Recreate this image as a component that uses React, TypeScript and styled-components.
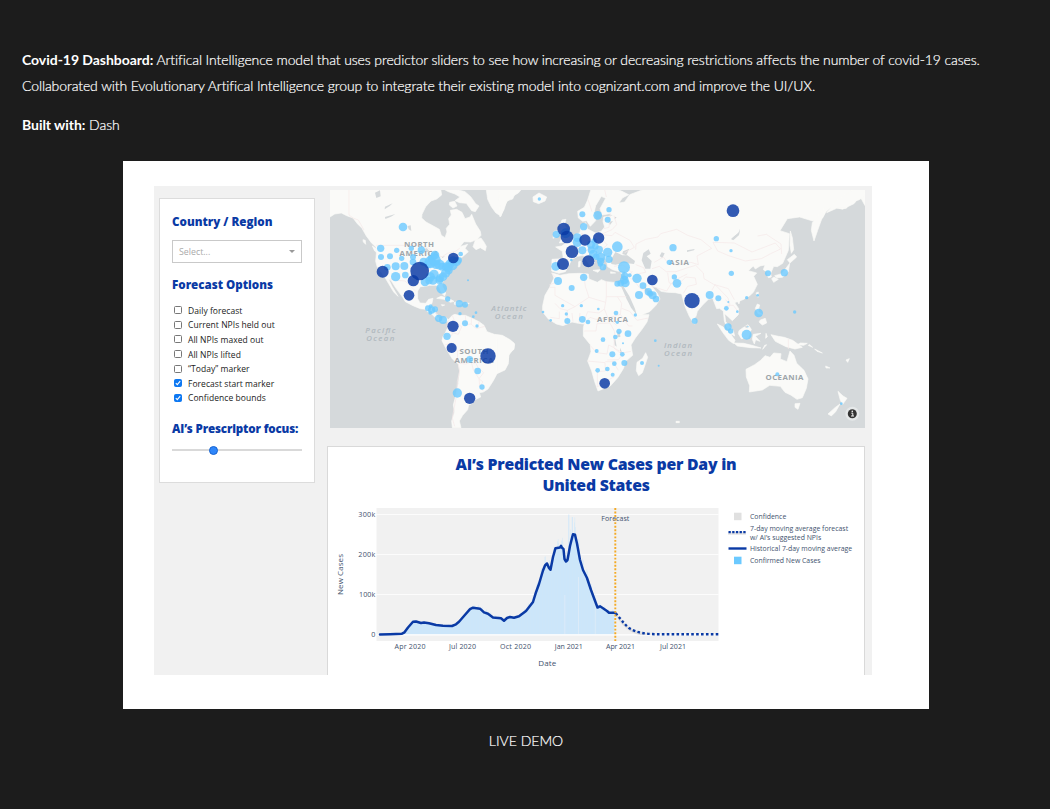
import React from "react";
import styled, { createGlobalStyle } from "styled-components";

const GlobalStyle = createGlobalStyle`
  * { box-sizing: border-box; }
  body {
    margin: 0;
    background: #1c1c1c;
    color: #fff;
    font-family: Lato, sans-serif;
  }
`;

const Page = styled.main`
  height: 809px;
  padding: 47px 22px 0;
  overflow: hidden;
  display: flex;
  flex-direction: column;
  align-items: center;
`;

const Intro = styled.section`
  width: 100%;
  font-size: 14px;
  font-weight: 300;
  line-height: 26px;
  letter-spacing: -0.1px;
  -webkit-text-stroke: 0.2px #fff;
`;

const Paragraph = styled.p`
  margin: 0 0 13px;
  white-space: nowrap;
`;

const Strong = styled.strong`
  font-weight: 700;
  letter-spacing: -0.04px;
  -webkit-text-stroke: 0;
`;

const Showcase = styled.figure`
  width: 806px;
  height: 548px;
  margin: 10px 0 0 2px;
  padding: 25px 57px 34px 31px;
  background: #fff;
`;

const Dashboard = styled.div`
  height: 489px;
  display: flex;
  align-items: flex-start;
  padding-left: 5px;
  background: #f1f1f1;
  color: #222;
  font-family: "Open Sans", sans-serif;
`;

const Sidebar = styled.aside`
  width: 156px;
  height: 285px;
  margin-top: 12px;
  padding: 15px 12px 0;
  background: #fff;
  border: 1px solid #dcdcdc;
`;

const SideHeading = styled.h3<{ $gap: number; $track?: number }>`
  margin: 0 0 ${(p) => p.$gap}px;
  color: #0a3aa5;
  font-size: 11.6px;
  font-weight: 800;
  line-height: 16px;
  letter-spacing: ${(p) => p.$track ?? 0}px;
  white-space: nowrap;
`;

const Select = styled.div`
  width: 130px;
  height: 23px;
  margin-bottom: 14px;
  padding: 0 6px;
  display: flex;
  align-items: center;
  justify-content: space-between;
  border: 1px solid #c9c9c9;
  color: #aaa;
  font-size: 8.8px;
`;

const Caret = styled.span`
  border: 3px solid transparent;
  border-top-color: #999;
  border-bottom: 0;
`;

const Options = styled.ul`
  margin: 0 0 16px;
  padding: 0;
  list-style: none;
`;

const Option = styled.li`
  height: 14.6px;
  padding-left: 2px;
  display: flex;
  align-items: center;
  gap: 6px;
  font-size: 8.5px;
  letter-spacing: 0.05px;
  white-space: nowrap;
`;

const Check = styled.span<{ $on: boolean }>`
  width: 8px;
  height: 8px;
  display: flex;
  border: 1px solid ${(p) => (p.$on ? "#0d78f2" : "#777")};
  border-radius: 1.5px;
  background: ${(p) => (p.$on ? "#0d78f2" : "#fff")};
`;

const Slider = styled.div`
  width: 130px;
  height: 9px;
  display: flex;
  align-items: center;
  background: linear-gradient(#d9d9d9, #d9d9d9) center / 100% 2.4px no-repeat;
`;

const Knob = styled.span`
  width: 9px;
  height: 9px;
  margin-left: 37px;
  border: 1px solid #1763d1;
  border-radius: 50%;
  background: #2e86fa;
`;

const Main = styled.div`
  width: 538px;
  margin-left: 12px;
  padding-top: 4px;
`;

const MapFrame = styled.div`
  height: 238px;
  margin-left: 3px;
  svg { display: block; }
`;

const ChartPanel = styled.section`
  height: 229px;
  margin-top: 18px;
  padding-top: 7px;
  border: 1px solid #d9d9d9;
  border-bottom: 0;
  background: #fff;
`;

const ChartTitle = styled.h2`
  margin: 0 0 1px;
  color: #0a3aa5;
  font-size: 15.8px;
  font-weight: 800;
  line-height: 21px;
  letter-spacing: -0.25px;
  text-align: center;
`;

const ChartBody = styled.div`
  display: flex;
  align-items: flex-start;
`;

const Legend = styled.ul`
  margin: 12px 0 0 8px;
  padding: 0;
  list-style: none;
  color: #42526e;
  font-size: 6.9px;
  line-height: 9px;
`;

const LegendRow = styled.li<{ $height: number }>`
  height: ${(p) => p.$height}px;
  display: flex;
  align-items: center;
  gap: 3px;
  white-space: nowrap;
`;

const Demo = styled.a`
  margin: 19px 0 0 2px;
  font-size: 14px;
  font-weight: 300;
  line-height: 26px;
  -webkit-text-stroke: 0.2px #fff;
`;

type Bubble = [number, number, number];
type Region = {
  origin: string;
  land: string;
  water: string;
  borders: string;
  light: Bubble[];
  dark: Bubble[];
};

// Each region is drawn on its own grid, three units to a pixel.
const regions: Region[] = [
  {
    origin: "translate(325 185) scale(.33333)",
    land: `M0 0H345L350 30L335 42L318 48L302 65L291 88L290 99L303 111L325 123L343 133L349 151L360 158L366 141L364 130L374 118L371 101L379 90L376 76L395 73L411 82L420 101L435 96L440 88L452 117L466 139L468 151L457 163L437 171L417 170L405 185L428 178L420 190L430 200L412 216L401 219L400 234L382 249L370 260L366 276L352 291L352 304L362 324L359 333L350 325L343 307L333 301L314 301L300 304L286 305L278 318L278 341L285 354L302 355L311 343L324 340L321 354L315 365L328 367L336 370L331 385L343 401L363 397L370 405L365 410L346 411L330 397L321 388L306 379L302 373L286 371L264 362L241 350L233 337L211 307L198 286L191 283L201 304L219 334L206 321L191 296L181 279L169 262L157 247L152 229L154 206L153 187L139 173L124 153L111 130L97 116L84 99L65 92L49 84L29 87L12 98Z
      M369 405L382 391L390 388L401 391L421 391L439 399L462 410L477 421L486 440L508 448L532 451L555 464L568 475L565 493L551 511L550 536L540 555L516 566L505 587L489 612L475 621L463 623L467 636L449 645L440 656L431 660L428 674L413 691L403 708L408 728L382 728L380 708L389 681L385 660L394 625L400 596L404 558L400 537L382 522L370 502L359 483L351 467L354 454L361 443L369 426Z
      M353 0H375L390 12L420 20L437 35L452 56L462 63L451 80L440 77L424 55L404 53L390 47L405 36L390 27L370 20L355 12Z M374 52L389 49L396 63L384 69L373 60Z
      M482 0H600L580 24L552 40L536 67L528 94L512 83L499 65L488 43Z
      M335 340L348 334L369 339L387 349L377 352L357 343Z M388 352L401 350L414 355L402 361L388 358Z M349 359L359 360L352 363Z M423 354L433 355L424 358Z M444 185L451 166L468 159L476 170L484 184L481 197L466 188L453 194Z M142 183L154 191L162 204L149 198Z M114 164L121 166L122 178L115 171Z`,
    water: `M150 23L165 16L167 34L154 39Z M180 65L203 55L194 63L179 73Z M180 96L211 87L198 95L181 102Z M248 123L257 121L259 138L251 133Z M284 199L305 189L315 200L299 202Z M310 208L314 203L316 223L309 232Z M323 205L337 212L330 222Z M337 224L350 221L342 229Z M350 216L360 213L353 219Z M336 389L345 384L346 391L338 398Z`,
    borders: `M72 0V90L84 99L100 105L117 135M154 181H283L311 190L337 212L352 215L367 205L391 199L404 190M195 282L218 286L240 288L264 311L272 318M303 361L316 366M330 383L340 390M370 405L366 426L382 444L380 452L359 454M382 391L391 414L410 425L400 448L382 443M421 391L423 419L438 417L454 431L480 424M439 400L439 417M462 410L459 426M359 480L380 473L384 493L398 498L397 535M398 498L418 494L432 511L447 524L459 547L476 563L462 581L474 591L462 606M402 535L422 537L439 531L449 536M400 537L404 558L397 590L396 624L388 666L382 700L389 724M439 531L445 555L462 581L464 602L475 619`,
    light: [[234,126,13],[167,190,11],[168,216,9],[195,214,9],[215,196,8],[230,220,8],[259,190,8],[289,195,11],[264,216,9],[264,231,10],[212,244,12],[238,243,12],[187,247,10],[212,275,14],[241,270,10],[296,230,12],[317,221,10],[327,212,10],[310,237,13],[316,232,18],[329,225,18],[333,238,14],[344,239,15],[352,245,12],[364,245,13],[375,237,14],[382,240,16],[384,228,14],[395,230,13],[401,226,10],[371,256,12],[362,264,14],[354,275,13],[343,285,12],[327,268,14],[316,276,14],[324,286,13],[300,291,13],[312,287,11],[345,280,12],[350,310,16],[369,247,13],[330,210,13],[407,207,7],[429,286,3],[368,342,8],[403,356,11],[420,359,9],[309,370,9],[317,364,6],[320,375,11],[330,373,9],[316,383,6],[405,386,5],[453,383,4],[445,395,4],[341,400,11],[354,405,12],[420,415,9],[456,423,5],[366,454,11],[434,523,10],[458,558,10],[471,606,8],[397,624,14]],
    dark: [[173,260,18],[284,258,28],[265,287,17],[385,219,16],[252,331,16],[384,424,17],[380,489,15],[489,513,23],[434,640,17]],
  },
  {
    origin: "translate(500 185) scale(.33333)",
    land: `M277 0H1180L1095 62L1080 34L1062 56L1027 73L997 63L978 80L968 99L938 108L899 96L862 101L840 137L868 146L865 196L848 235L832 245L821 244L812 265L814 276L805 278L799 260L790 254L795 240L780 243L766 252L760 243L745 257L770 264L761 274L772 298L760 322L749 332L729 344L715 349L704 353L716 371L715 389L697 407L681 392L674 386L677 410L700 437L704 453L693 447L680 426L673 408L670 378L658 370L650 371L638 340L625 343L605 363L592 379L588 394L576 407L568 394L555 364L545 327L526 323L502 322L483 319L468 306L456 305L472 325L480 342L468 361L449 380L413 394L403 386L388 349L371 316L367 305L353 302L370 290L375 274L375 257L355 259L338 254L323 245L320 229L310 214L303 224L312 239L306 253L300 238L292 225L276 210L264 205L284 232L269 240L250 211L233 214L215 224L206 242L196 260L177 265L155 258L156 223L190 221L187 199L167 186L185 183L204 170L213 162L230 147L240 143L244 120L257 113L263 132L286 144L304 139L314 126L309 110L311 96L340 92L328 86L307 90L300 71L317 40L304 34L287 62L282 84L287 107L271 124L260 107L248 109L235 99L233 79L253 67L263 45Z
      M326 0L340 8L366 19L386 29L367 39L357 54L374 51L389 29L424 16L455 4L488 0Z
      M156 264L180 271L207 266L239 265L265 267L267 282L292 292L304 284L319 290L353 293L366 306L379 342L397 370L407 389L447 389L441 411L426 433L406 459L393 480L398 511L377 529L370 551L353 578L331 603L294 618L284 590L275 558L263 528L273 500L271 479L250 453L250 428L253 417L235 415L216 411L189 422L169 417L145 402L128 381L128 362L135 331L149 307L162 279Z
      M437 503L443 517L427 563L416 572L409 557L411 532L428 520Z
      M99 36L117 24L140 36L135 48L116 56L100 50Z M186 105L198 103L193 119L207 141L220 156L215 167L178 174L186 158L182 137L180 121Z M162 139L178 136L174 153L159 160Z
      M-3 15H50L38 42L20 48L12 74L0 96Z M-10 460L14 458L31 467L44 478L42 493L28 503L24 530L14 552L-10 559Z M236 230L241 228L240 245L235 246Z M279 256L300 254L294 262Z M332 260L347 264L332 265Z M362 264L371 260L367 268Z M528 709H538V713H528Z`,
    water: `M332 226L346 201L367 211L382 211L405 228L402 237L370 233L347 239L334 237Z M369 199L388 191L379 211L367 207Z M430 204L446 193L452 206L440 214L455 228L451 251L436 251L425 226Z M363 304L369 302L388 333L405 371L410 389L393 368L378 337Z M434 305L444 313L462 325L468 328L451 332L434 317Z M352 442L360 442L361 456L352 457Z M341 463L346 463L350 485L344 480Z M360 488L366 502L360 505Z M485 202L494 205L487 220L479 213Z M561 196L584 192L582 196L561 201Z M324 111L339 108L330 120Z M344 95L350 97L344 103Z M698 158L715 144L720 132L717 150L700 166Z`,
    borders: `M264 43L276 80M319 36L314 14M331 84L327 127L311 131M342 92L350 119L336 134L308 146L303 160L322 180L304 194L291 180L275 170L252 164L244 144M246 144L252 158L237 178L256 198L273 190L292 192L300 211L319 207L338 200M224 165L235 172L230 186L251 203L246 213M166 225L169 257M187 219L208 225M342 244L369 240L392 259M410 267L437 262L431 248L407 239M307 149L336 152L345 142L390 166L403 187L374 203M407 194L408 177L437 163L474 156L482 146L530 133L563 151L603 164L635 190L591 213L595 239L573 232L533 240L504 234L490 216L463 232M456 251L478 244L499 260L528 260L563 248L587 241L610 264L612 281L641 298L685 311L703 344M639 172L703 174L756 201L826 174L842 192L814 205L784 221L736 228L686 212L653 198L639 172M773 153L799 148L843 177L845 207M384 279L397 258M387 276L405 290L420 310L442 319M447 271L456 304L500 318L514 295L533 281L562 267M503 263L507 293L531 303L557 276L586 279L589 298L563 304L550 325M636 315L645 299L663 317L684 339L690 359M153 263L178 288L148 300M148 307H165V331L225 365L267 337L256 304L251 265M319 289V335H379M319 335L317 352L267 337M225 365L202 376L180 371L165 355M317 352L313 372L297 384L263 380M263 380L252 409M313 372L324 399L350 421M324 399L288 403L270 397L254 415M352 335L365 355L361 388L386 423L397 423M361 388L325 399M365 370L389 379L411 406L445 399M253 438H288L291 416L330 414L344 440L342 488L326 480L321 507L290 503L271 482M262 528L315 533L316 558L292 560L292 606L314 591L343 575M316 530L339 530L355 556M342 489L361 505L393 499M342 489L371 505L355 524L322 525M151 397L178 401L178 380M202 376L202 406M219 410L216 384M237 413L240 384`,
    light: [[118,42,5],[247,88,9],[327,74,8],[293,91,13],[323,104,9],[251,125,11],[169,148,11],[197,145,15],[232,158,13],[232,172,14],[247,196,12],[282,168,8],[273,179,12],[286,184,10],[274,195,11],[297,194,12],[280,207,13],[289,215,10],[302,217,14],[323,202,14],[327,223,11],[302,229,11],[301,237,8],[309,246,10],[352,185,16],[167,244,13],[214,225,4],[519,188,11],[508,232,8],[372,247,18],[389,271,6],[374,273,11],[373,285,13],[376,294,13],[362,295,10],[352,296,9],[251,277,11],[174,288,12],[215,309,9],[411,280,14],[429,302,10],[445,320,11],[450,326,9],[458,331,12],[468,342,10],[417,330,12],[523,276,8],[531,295,13],[188,362,5],[244,362,5],[295,372,4],[129,381,4],[199,387,5],[152,406,4],[202,408,9],[247,403,10],[264,411,7],[348,384,7],[406,390,5],[352,412,5],[357,439,8],[384,446,10],[346,456,7],[309,464,7],[369,475,3],[290,498,6],[337,508,9],[367,508,7],[343,536,7],[373,534,9],[322,552,7],[293,556,7],[338,569,6],[426,534,6],[466,467,4],[476,542,3]],
    dark: [[191,132,19],[201,156,19],[255,165,17],[296,159,17],[216,200,19],[189,237,18],[265,229,18],[457,285,16],[576,347,23],[314,595,16]],
  },
  {
    origin: "translate(680 185) scale(.33333)",
    land: `M198 553L224 539L242 526L255 512L270 517L281 504L303 506L301 522L321 530L330 498L342 511L350 535L372 556L384 582L379 610L367 638L351 643L332 630L315 622L301 604L269 601L247 615L208 621L209 602L199 576Z M345 656L360 655L354 673L345 667Z
      M474 619L489 633L501 640L488 658L481 646Z M480 657L467 680L454 693L444 687L465 668Z M112 417L130 426L152 448L165 466L161 476L146 466L128 442Z M162 474L191 475L216 481L243 489L212 488L172 483Z M177 437L188 429L204 419L214 433L204 459L184 461L175 446Z M220 448L243 445L226 454L240 469L227 464L223 477L217 463Z M273 449L295 454L313 457L338 466L367 487L345 492L318 485L286 469Z M232 357L239 360L234 379L247 388L235 387L226 370Z M241 405L256 400L260 414L247 420L237 411Z M322 224L343 208L350 216L330 234Z M329 235L325 260L307 277L290 278L284 272L306 266L320 247Z M275 281L282 276L295 283L281 292Z M331 138L337 158L341 194L334 205L330 181Z M436 66L431 88L423 108L413 136L402 168L394 136L397 113Z M540 0H554V34L536 45L512 51L499 70L470 70L440 83L470 44L503 25Z M228 324L235 321L234 337Z M171 347L180 345L177 357Z M361 474L382 475L371 481L352 479Z M389 479L398 487L385 481Z M404 492L427 504L411 499Z M437 543L450 549L438 549Z M498 525L508 521L503 532Z M38 400L48 406L45 417L37 413Z M254 481L260 479L248 493Z M258 445L262 455L257 460Z`,
    water: "M193 425L204 421L202 430Z M153 162L177 142L180 131L177 149L158 165Z",
    borders: "M325 462V492M137 344L149 360L144 371M137 361L160 361L176 382",
    light: [[109,161,8],[153,197,5],[154,265,8],[264,265,9],[313,263,11],[89,330,12],[115,340,9],[145,351,3],[200,338,5],[233,331,4],[139,370,7],[172,380,4],[236,384,13],[344,381,5],[44,408,9],[144,426,11],[152,438,8],[200,449,15],[204,425,2],[292,568,6],[484,656,4]],
    dark: [[159,77,19]],
  },
];

const placeNames: [string, number, number, boolean, number][] = [
  ["NORTH", 419, 247.2, false, 30],
  ["AMERICA", 419, 256.4, false, 39],
  ["SOUTH", 474, 353.7, false, 29],
  ["AMERICA", 474, 362.9, false, 39],
  ["AFRICA", 612.5, 322, false, 31],
  ["ASIA", 679, 265.3, false, 20],
  ["OCEANIA", 784.5, 379.6, false, 38],
  ["Pacific", 380.3, 333.3, true, 30],
  ["Ocean", 380.3, 341.4, true, 28],
  ["Atlantic", 508.8, 310.8, true, 35],
  ["Ocean", 508.8, 319, true, 28],
  ["Indian", 678, 347.8, true, 28],
  ["Ocean", 678, 356.3, true, 28],
];

function WorldMap() {
  return (
    <svg width="535" height="238" viewBox="330 190 535 238">
      <rect x="330" y="190" width="535" height="238" fill="#d5d9db" />
      {regions.map((r) => (
        <g key={r.origin} transform={r.origin} strokeLinejoin="round">
          <path d={r.land} fill="#fafaf8" stroke="#fafaf8" strokeWidth="2" />
          <path d={r.water} fill="#d5d9db" />
          <path d={r.borders} fill="none" stroke="#f5e9e9" strokeWidth="2.2" />
        </g>
      ))}
      {placeNames.map(([name, x, y, ocean, w]) => (
        <text
          key={name + x + y}
          x={x}
          y={y}
          textAnchor="middle"
          textLength={w}
          fontFamily="Open Sans"
          fontSize={ocean ? 7.8 : 7.8}
          fontWeight={ocean ? 600 : 700}
          fontStyle={ocean ? "italic" : "normal"}
          fill={ocean ? "#b0b8be" : "#9da5aa"}
        >
          {name}
        </text>
      ))}
      {regions.map((r) => (
        <g key={r.origin} transform={r.origin}>
          {r.light.map(([x, y, s], i) => (
            <circle key={i} cx={x} cy={y} r={s} fill="#6bc9ff" fillOpacity=".8" />
          ))}
          {r.dark.map(([x, y, s], i) => (
            <circle key={i} cx={x} cy={y} r={s} fill="#0a3aa5" fillOpacity=".83" />
          ))}
        </g>
      ))}
      <circle cx="852.3" cy="413.8" r="7" fill="#e5e8e9" />
      <circle cx="852.3" cy="413.8" r="4.5" fill="#333" />
      <path d="M851.3 413.2h1.5v2.8m-1.8 0h3" stroke="#eee" strokeWidth="1" fill="none" />
      <circle cx="852.3" cy="411.4" r=".8" fill="#eee" />
    </svg>
  );
}

const history: [number, number][] = [
  [380,634.4],[390,634.2],[402,633.7],[404.5,632.3],[408,627.5],[413,621.8],[416,621.5],[421,623],[424,622.5],[429,623.3],[436,625],[443,625.7],[452,626],[456,624.3],[459,621.8],[464,616],[470,609.2],[473,607.7],[480,608.7],[484,612.4],[488,613.7],[493,617.5],[501,618.3],[504,620.7],[507,618],[510,617],[514,617.8],[519,616.3],[526,611],[533,602],[536,592.2],[539,584],[543,570.5],[545,565.5],[547,563.5],[549,568],[550.5,569.8],[553,557],[555.5,548.2],[560,547.4],[561,545.8],[562,547.8],[563.5,549],[564.5,559],[566,561.5],[567.5,560],[570,546],[572,538],[573,534.2],[575,534.8],[577,543.5],[580,560],[583,570],[587,578],[591,590],[597.5,607.5],[600,606.3],[603,608.2],[607,611],[609,612.8],[614.5,612.8],
];

const linePoints = history.map((p) => p.join(",")).join(" ");

function valueAt(x: number) {
  const i = Math.max(1, history.findIndex((p) => p[0] >= x));
  const [x0, y0] = history[i - 1];
  const [x1, y1] = history[i];
  return y0 + ((y1 - y0) * (x - x0)) / (x1 - x0);
}

// Daily counts swing around the moving average with a weekly rhythm.
const bars = Array.from({ length: 390 }, (_, day) => {
  const x = 380.3 + day * 0.6;
  const wave = Math.sin((day * Math.PI * 2) / 7) * 0.14 + Math.sin(day * 5.3) * 0.04;
  return { x, y: Math.max(516, 634.5 - (634.5 - valueAt(x)) * (1 + wave)) };
});

function CasesChart() {
  return (
    <svg width="392" height="172" viewBox="328 497 392 172" fontFamily="Open Sans" fill="#42526e">
      <rect x="376.5" y="508" width="342" height="133" fill="#f1f1f1" />
      {[514.5, 554.5, 594.5].map((y) => (
        <path key={y} d={`M376.5 ${y}H718.5`} stroke="#fff" strokeWidth=".8" />
      ))}
      <polygon points={`380,634.5 ${linePoints} 614.5,634.5`} fill="#d0e7f9" />
      {bars.map((b) => (
        <rect key={b.x} x={b.x} y={b.y} width=".4" height={634.5 - b.y} fill="#cbe6fa" />
      ))}
      <path d="M568.8 514.5V550M572.3 517V540" stroke="#cde7fa" strokeWidth=".9" />
      <path d="M564.8 595V634M595.3 587V634M578.5 577V634" stroke="#e5eff7" strokeWidth=".6" />
      <path d="M376.5 634.8H718.5" stroke="#fff" strokeWidth="1.2" />
      <path d="M615 611C620 618 624 625 632 629C640 633 649 634 660 634L640 635C630 633 623 627 615 615Z" fill="#dedede" />
      <polyline points={linePoints} fill="none" stroke="#0a3aa5" strokeWidth="2.5" strokeLinejoin="round" strokeLinecap="round" />
      <path d="M615.5 613.2C622 620 624 624 629 628C637 633.5 649 634.2 660 634.3H718.3" fill="none" stroke="#0a3aa5" strokeWidth="2.4" strokeDasharray="2.6 2.3" />
      <text x="615.3" y="521" fontSize="7" textAnchor="middle" textLength="28">Forecast</text>
      <path d="M615.3 508V641" stroke="#f4aa25" strokeWidth="1.9" strokeDasharray="1.9 1.65" />
      <g fontSize="7.2" textAnchor="end">
        <text x="375.3" y="517.3" textLength="17">300k</text>
        <text x="375.3" y="557.3" textLength="17">200k</text>
        <text x="375.3" y="597.3" textLength="16.3">100k</text>
        <text x="375.3" y="637.3">0</text>
      </g>
      <g fontSize="7.1" textAnchor="middle">
        <text x="410" y="649.2" textLength="31">Apr 2020</text>
        <text x="462.5" y="649.2" textLength="27">Jul 2020</text>
        <text x="515.5" y="649.2" textLength="31">Oct 2020</text>
        <text x="568.8" y="649.2" textLength="28">Jan 2021</text>
        <text x="620.5" y="649.2" textLength="29">Apr 2021</text>
        <text x="673" y="649.2" textLength="26">Jul 2021</text>
      </g>
      <text x="547.3" y="665.5" fontSize="8" textAnchor="middle" textLength="18">Date</text>
      <text transform="translate(343.3 574.5) rotate(-90)" fontSize="8" textAnchor="middle" textLength="41">New Cases</text>
    </svg>
  );
}

function LegendMark({ kind }: { kind: "grey" | "dots" | "line" | "blue" }) {
  return (
    <svg width="19" height="9" viewBox="0 0 19 9">
      {kind === "grey" && <rect x="6" y=".7" width="7.5" height="7.5" fill="#e0e0e0" />}
      {kind === "blue" && <rect x="6" y=".7" width="7.5" height="7.5" fill="#6bc9ff" />}
      {kind === "line" && <path d="M.5 4.5h18" stroke="#0a3aa5" strokeWidth="2.4" />}
      {kind === "dots" && (
        <>
          <path d="M0 5.3h18" stroke="#e6e6e6" strokeWidth="3" />
          <path d="M.5 4.2h18" stroke="#0a3aa5" strokeWidth="2.3" strokeDasharray="2.3 1.4" />
        </>
      )}
    </svg>
  );
}

const options: [string, boolean][] = [
  ["Daily forecast", false],
  ["Current NPIs held out", false],
  ["All NPIs maxed out", false],
  ["All NPIs lifted", false],
  ["“Today” marker", false],
  ["Forecast start marker", true],
  ["Confidence bounds", true],
];

export default function App() {
  return (
    <Page>
      <GlobalStyle />
      <Intro>
        <Paragraph>
          <Strong>Covid-19 Dashboard:</Strong> Artifical Intelligence model that uses predictor sliders to see how
          increasing or decreasing restrictions affects the number of covid-19 cases.
          <br />
          Collaborated with Evolutionary Artifical Intelligence group to integrate their existing model into
          cognizant.com and improve the UI/UX.
        </Paragraph>
        <Paragraph>
          <Strong>Built with:</Strong> Dash
        </Paragraph>
      </Intro>
      <Showcase>
        <Dashboard>
          <Sidebar>
            <SideHeading $gap={10}>Country / Region</SideHeading>
            <Select>
              Select...
              <Caret />
            </Select>
            <SideHeading $gap={10}>Forecast Options</SideHeading>
            <Options>
              {options.map(([label, on]) => (
                <Option key={label}>
                  <Check $on={on}>
                    {on && (
                      <svg width="6" height="6" viewBox="0 0 6 6">
                        <path d="M.8 3.2L2.3 4.7L5.2 1.2" fill="none" stroke="#fff" strokeWidth="1.1" />
                      </svg>
                    )}
                  </Check>
                  {label}
                </Option>
              ))}
            </Options>
            <SideHeading $gap={9} $track={-0.16}>AI’s Prescriptor focus:</SideHeading>
            <Slider>
              <Knob />
            </Slider>
          </Sidebar>
          <Main>
            <MapFrame>
              <WorldMap />
            </MapFrame>
            <ChartPanel>
              <ChartTitle>
                AI’s Predicted New Cases per Day in
                <br />
                United States
              </ChartTitle>
              <ChartBody>
                <CasesChart />
                <Legend>
                  <LegendRow $height={14}><LegendMark kind="grey" />Confidence</LegendRow>
                  <LegendRow $height={19}>
                    <LegendMark kind="dots" />
                    <span>7-day moving average forecast<br />w/ AI’s suggested NPIs</span>
                  </LegendRow>
                  <LegendRow $height={12}><LegendMark kind="line" />Historical 7-day moving average</LegendRow>
                  <LegendRow $height={12}><LegendMark kind="blue" />Confirmed New Cases</LegendRow>
                </Legend>
              </ChartBody>
            </ChartPanel>
          </Main>
        </Dashboard>
      </Showcase>
      <Demo>LIVE DEMO</Demo>
    </Page>
  );
}
